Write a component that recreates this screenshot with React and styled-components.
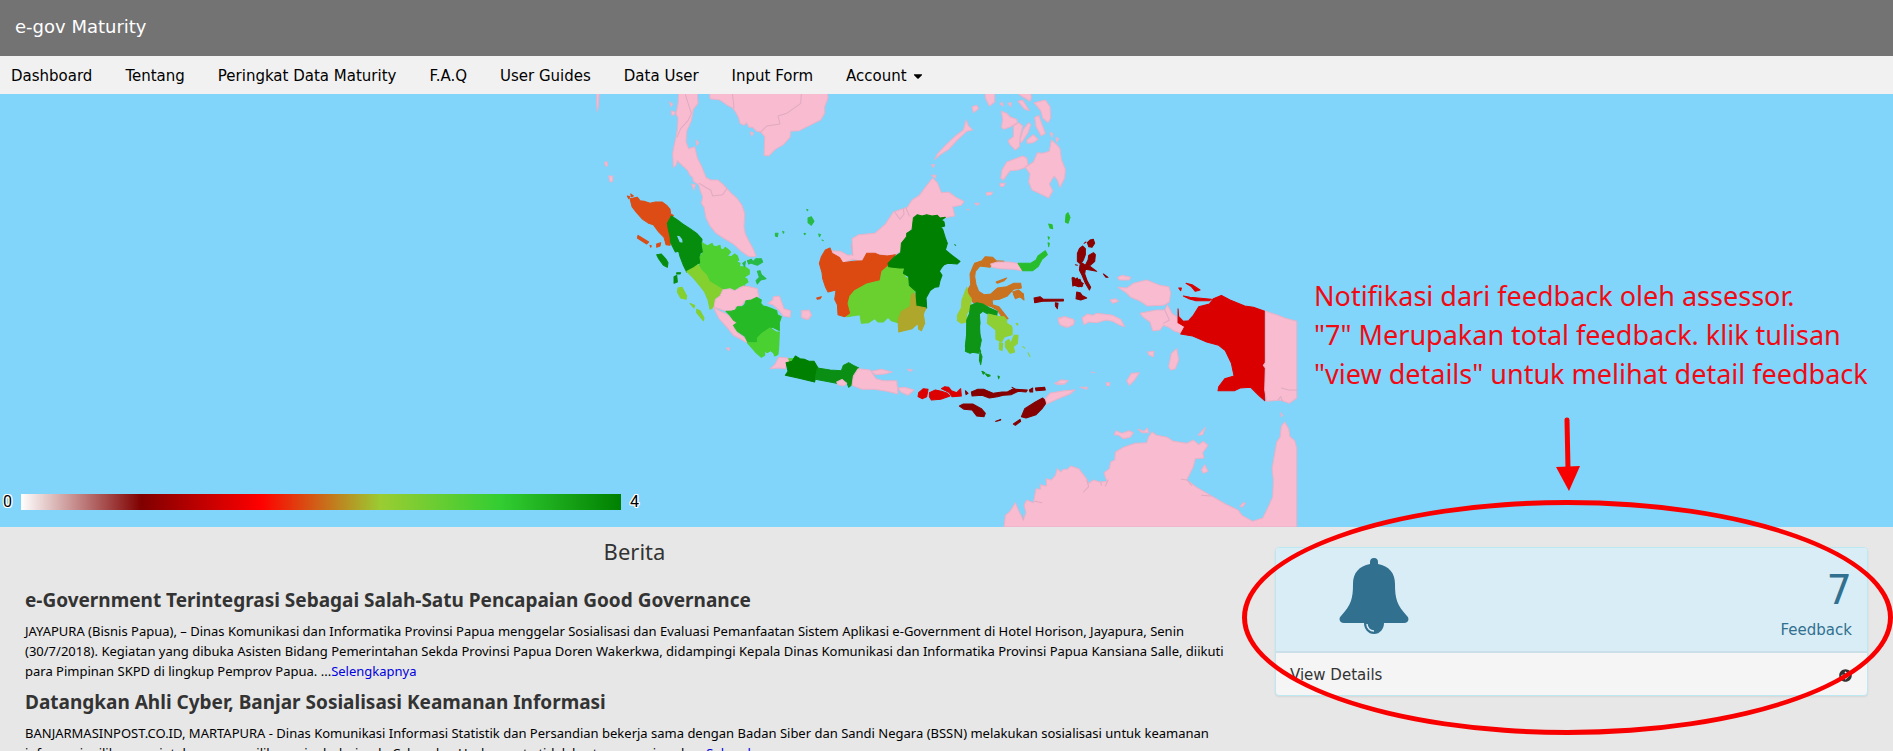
import React from "react";
import styled, { createGlobalStyle } from "styled-components";
import { FaArrowCircleRight, FaCaretDown } from "react-icons/fa";

const GlobalStyle = createGlobalStyle`
  *, *::before, *::after { box-sizing: border-box; }
  html { scrollbar-width: none; }
  body {
    margin: 0;
    overflow-x: hidden;
    background: #e7e7e7;
    color: #000;
    font: 15px/1.5 Verdana, "DejaVu Sans", sans-serif;
  }
`;

const reading = `"Segoe UI", "Noto Sans", "Open Sans", sans-serif`;

const Header = styled.header`
  display: flex;
  align-items: center;
  height: 56px;
  padding: 0 15px 3px;
  background: #737373;
  color: #fff;
  font-size: 18px;
`;

const Nav = styled.nav`
  display: flex;
  align-items: center;
  gap: 33px;
  height: 38px;
  padding: 2px 11px 0;
  background: #f1f1f1;
`;

const NavLink = styled.a`
  color: #000;
  text-decoration: none;
  white-space: nowrap;
`;

const NavButton = styled.button`
  display: flex;
  align-items: center;
  gap: 4px;
  padding: 0;
  border: 0;
  background: none;
  color: #000;
  font: inherit;
  cursor: pointer;
`;

const MapSection = styled.section`
  position: relative;
  display: grid;
  grid-template-columns: 24fr 11fr;
  background: #81d4fa;
`;

const MapDrawing = styled.svg`
  display: block;
  width: 100%;
  height: auto;
`;

const Legend = styled.div`
  position: absolute;
  left: 3px;
  bottom: 17px;
  width: 34%;
  max-width: 636px;
  display: flex;
  align-items: center;
  gap: 9px;
  font: 16px/16px Roboto, sans-serif;
  text-shadow: 1px 0 #fff, -1px 0 #fff, 0 1px #fff, 0 -1px #fff, 1px 1px #fff,
    -1px -1px #fff, 1px -1px #fff, -1px 1px #fff;
`;

const LegendBar = styled.div`
  flex: 1;
  height: 16px;
  background: linear-gradient(90deg, #fff, #800000 20%, #f00 40%, #9acd32 60%, #32cd32 80%, #008000);
`;

const Note = styled.p`
  margin: 0;
  padding: 182px 0 0 16px;
  color: #f00a14;
  font: 27px/39px ${reading};
  white-space: nowrap;
`;

const Content = styled.main`
  display: grid;
  grid-template-columns: 2fr 1fr;
  align-items: start;
`;

const News = styled.section`
  padding: 8px 18px 24px 25px;
`;

const NewsTitle = styled.h3`
  margin: 0 0 20px;
  color: #333;
  font: 400 22px/32px ${reading};
  text-align: center;
`;

const Article = styled.article`
  margin-bottom: 8px;
`;

const ArticleTitle = styled.h4`
  margin: 0 0 8px;
  color: #333;
  font: 700 19px/26px ${reading};
`;

const ArticleText = styled.p`
  margin: 0;
  font: 13px/20px ${reading};
`;

const MoreLink = styled.a`
  color: #0000e0;
  text-decoration: none;
`;

const Side = styled.aside`
  padding: 20px 25px 40px 13px;
`;

const Panel = styled.div`
  position: relative;
  border: 1px solid #bce8f1;
  border-radius: 4px;
  background: #f5f5f5;
  box-shadow: 0 1px 2px rgba(0, 0, 0, 0.08);
`;

const PanelHead = styled.div`
  display: flex;
  justify-content: space-between;
  height: 105px;
  padding: 10px 15px 0 63px;
  border-bottom: 2px solid #cbdfe8;
  border-radius: 3px 3px 0 0;
  background: #d9edf7;
  color: #31708f;
`;

const BellIcon = styled.svg`
  width: 70px;
  height: 76px;
  fill: currentColor;
`;

const Counter = styled.div`
  display: flex;
  flex-direction: column;
  padding-top: 8px;
  text-align: right;
`;

const CounterValue = styled.span`
  font-size: 40px;
  line-height: 48px;
`;

const CounterLabel = styled.span`
  padding-top: 4px;
  line-height: 24px;
`;

const PanelFoot = styled.a`
  display: flex;
  align-items: center;
  justify-content: space-between;
  height: 42px;
  padding: 2px 15px 0 14px;
  color: #333;
  text-decoration: none;
`;

const Highlight = styled.div`
  position: absolute;
  top: -48px;
  left: -34px;
  right: -26px;
  height: 235px;
  border: 5px solid #f80000;
  border-radius: 50%;
  pointer-events: none;
`;

const Arrow = styled.svg`
  position: absolute;
  left: calc(50% - 12px);
  bottom: calc(100% + 14px);
  width: 24px;
  height: 76px;
`;

const PINK = "#f8bbd0";

/* Each sheet is drawn at three units to one map pixel; x and y place it on the map. */
const sheets = [
  {
    x: 590,
    y: -4,
    regions: [
      [PINK, "M266 0 L264 40 258 72 264 84 262 118 258 142 252 168 248 190 250 232 258 226 262 212 276 226 292 240 300 256 308 262 310 274 326 284 330 300 338 320 334 340 342 352 348 384 360 408 378 430 400 444 430 462 454 484 474 498 486 500 498 498 490 478 478 456 466 432 462 412 464 370 456 346 442 326 424 310 400 284 384 270 362 270 348 262 336 232 322 204 314 170 296 176 288 156 290 124 304 92 310 58 324 40 322 0Z"],
      [PINK, "M358 0 L360 26 390 30 412 46 428 54 438 68 446 84 450 100 462 106 470 98 476 112 488 112 500 124 512 126 524 140 522 196 536 198 556 178 580 164 600 142 602 124 628 122 664 104 692 90 704 70 704 50 714 24 712 0Z"],
      [PINK, "M20 0 L20 40 22 64 25 50 28 0Z M44 216 L52 216 52 228 46 228Z M56 258 L68 258 68 274 60 276Z M238 36 L248 42 244 50Z M244 62 L256 66 252 76 244 74Z M304 282 L316 284 312 300Z M318 150 L326 158 320 166Z M480 126 L490 128 486 138Z M408 774 L420 774 416 782Z"],
      ["#dc4c14", "M120 326 L142 322 150 332 162 334 180 340 196 336 216 336 230 346 240 358 242 372 250 376 232 398 234 414 238 426 242 440 240 466 228 464 222 442 206 426 190 404 176 400 158 388 140 368 126 350Z M112 318 L120 320 116 326Z M122 312 L130 318 124 320Z M144 436 L176 456 170 462 142 444Z M200 462 L212 458 210 468 200 472Z M180 466 L184 468 182 472Z"],
      ["#078d0d", "M244 378 L262 390 278 402 300 416 320 430 336 448 334 466 340 486 330 490 330 500 332 518 322 522 318 534 308 532 290 546 280 526 270 500 266 484 256 486 248 470 242 458 240 440 234 414 232 400Z M200 494 L214 492 228 508 234 518 232 532 220 526 206 506Z M252 560 L260 556 262 576 252 580Z M260 548 L272 548 270 552 260 552Z"],
      ["#81d4fa", "M263 439 L268 440 275 449 276 456 270 455Z"],
      ["#4dd030", "M336 458 L346 464 352 468 366 460 370 468 378 470 390 466 392 476 398 480 406 472 414 478 422 486 412 498 424 500 434 492 442 498 446 510 440 516 450 520 448 530 464 530 478 540 478 552 462 562 470 566 474 576 464 582 464 590 450 588 434 600 420 594 398 598 380 586 360 576 352 556 334 540 328 526 332 518 330 500 340 486Z"],
      ["#27ba47", "M458 520 L466 514 464 530Z M472 512 L484 508 490 516 476 522Z M484 520 L498 506 514 506 518 516 502 526Z M502 544 L510 542 514 554 528 566 512 570 502 582 498 572 508 562Z M654 384 L664 380 672 394 664 406 654 398Z M556 430 L564 430 562 440 556 438Z M578 424 L582 426 580 430Z M650 358 L654 360 652 362Z M686 432 L692 434 688 440Z M696 450 L700 452Z M642 430 L647 431 644 434Z"],
      ["#83d02f", "M290 544 L310 534 324 524 334 540 350 556 358 574 380 588 400 600 394 614 376 626 370 652 360 658 354 630 344 606 330 588 310 564Z M264 594 L276 592 290 618 288 628 272 624 262 606Z M300 640 L314 646 312 654Z M320 658 L330 662 342 684 340 692 320 668Z"],
      [PINK, "M398 600 L420 596 434 602 460 588 478 590 502 596 506 620 486 628 464 634 456 646 438 650 434 660 410 664 398 660 372 652 376 628 390 618Z"],
      [PINK, "M370 652 L392 664 410 672 428 688 440 700 432 714 444 728 460 740 474 752 470 758 446 744 430 736 416 718 400 700 386 684Z"],
      ["#27ba27", "M408 664 L424 664 436 660 442 650 456 650 464 644 468 632 484 630 500 622 514 630 512 640 520 648 530 650 546 656 560 662 562 674 574 680 568 698 568 722 548 712 530 722 514 730 502 744 502 758 474 758 464 738 442 724 430 706 442 698 430 690 420 676Z"],
      ["#4bd032", "M472 758 L502 758 502 744 516 730 540 714 558 726 568 726 566 774 564 792 554 798 550 786 542 782 532 788 524 784 524 796 514 802 496 786Z"],
      [PINK, "M534 640 L548 630 550 620 568 618 574 634 582 656 602 662 600 682 580 678 566 660 548 644Z M634 662 L656 660 664 674 656 688 640 686Z"],
    ],
    borders: [
      "M286 14 L304 70 294 92 272 116 262 140",
      "M328 280 L350 294 362 300 368 318 398 314 410 296",
      "M426 0 L432 54 M512 126 L530 108 570 102 564 78 590 70 632 40 634 12",
    ],
  },
  {
    x: 800,
    y: -4,
    regions: [
      [PINK, "M92 482 L122 484 144 496 158 494 156 446 176 434 224 430 256 402 280 366 322 352 336 330 358 316 380 286 398 264 412 278 424 308 446 306 468 322 492 334 484 346 458 350 464 378 430 384 350 378 338 410 318 438 308 480 280 498 238 494 200 492 184 514 158 508 130 518Z"],
      [PINK, "M404 208 L412 192 440 162 466 138 490 120 498 90 506 108 518 120 500 124 470 152 446 178 418 196Z M516 50 L530 46 536 56 520 68Z M394 224 L404 224 400 232Z M394 256 L408 256 406 264Z"],
      [PINK, "M554 0 L584 0 584 36 568 48 556 24Z M604 64 L620 70 632 82 650 88 652 98 632 110 612 118 604 112 608 88Z M640 108 L656 98 668 108 660 140 658 170 646 180 630 164 624 152 640 140Z M686 98 L692 104 684 128 664 158 660 150 670 118Z M654 34 L668 30 688 62 672 56Z M640 0 L690 0 694 22 690 34 664 18Z M702 38 L736 30 750 50 752 84 744 98 728 84 722 62Z M704 82 L716 76 736 130 724 138 708 110Z M680 150 L700 134 714 148 700 158 682 160Z M600 42 L606 36 610 48Z M624 40 L634 38 632 50Z M750 128 L758 130 756 142Z M768 142 L776 146 770 156Z"],
      [PINK, "M754 150 L770 164 780 176 784 208 796 238 794 264 780 292 772 270 762 258 748 282 758 302 746 324 726 314 696 300 686 276 690 252 676 232 700 216 712 188 728 190 748 184Z M680 204 L668 198 646 206 620 216 606 240 602 264 610 270 620 256 630 242 654 240 672 234 684 224Z M600 280 L616 280 610 290 600 288Z M558 308 L578 306 574 314 560 316Z M524 340 L538 340 532 346Z M500 358 L508 360Z"],
      ["#dc4a12", "M90 474 L96 490 118 502 128 518 160 514 188 512 200 490 226 490 240 496 262 498 286 494 268 514 264 530 244 544 240 572 210 578 184 590 164 600 148 620 144 640 152 658 150 672 134 680 114 674 112 644 104 628 108 600 84 606 76 590 68 566 66 548 58 520 64 500 76 480Z M50 624 L64 620 60 626 52 628Z"],
      ["#69d030", "M262 530 L282 526 296 534 314 526 318 546 314 560 326 566 326 586 344 602 340 620 330 650 304 666 294 698 274 692 264 682 250 696 234 696 224 686 206 698 184 700 180 674 140 680 152 670 144 640 150 618 164 602 200 582 240 572 246 544Z"],
      ["#008000", "M340 384 L352 374 366 378 380 374 396 378 412 376 420 384 436 382 424 390 432 396 434 408 422 412 428 418 436 444 442 460 436 480 456 496 480 514 472 522 444 520 432 524 424 534 418 544 426 556 420 572 416 590 404 592 390 602 378 624 380 654 362 658 346 648 348 604 328 586 326 560 310 550 314 534 298 534 266 530 264 520 284 500 302 488 304 460 320 440 320 430 336 420Z M464 464 L467 466Z"],
      ["#aea72b", "M334 614 L344 610 348 648 378 654 370 672 374 700 364 722 356 718 354 700 336 716 296 726 294 690 304 664 330 650Z"],
      ["#c97220", "M510 552 L518 532 524 520 546 512 556 500 578 502 588 512 612 514 600 520 576 522 570 532 540 528 526 544 524 560 528 584 536 604 552 614 572 612 592 594 620 590 640 580 662 580 664 594 640 598 622 618 598 628 576 630 578 644 596 650 612 670 624 686 610 688 592 660 574 650 548 642 520 638 508 618 498 608 512 584Z M588 576 L620 564 612 572 592 580Z M638 606 L656 600 670 612 668 626 660 620 648 620Z"],
      [PINK, "M572 522 L592 516 628 516 652 520 664 534 666 542 640 538 600 536 576 532Z"],
      ["#28bd2c", "M654 520 L692 520 708 510 714 498 736 482 742 494 726 508 714 530 698 542 668 542Z M746 402 L756 404 758 416 750 414Z M798 374 L804 368 810 382 804 400 796 396Z M744 440 L748 442 746 448Z M744 458 L748 460 746 470Z"],
      ["#9acd32", "M500 592 L504 612 514 626 510 656 500 672 498 696 484 700 472 692 472 676 484 654 486 630Z"],
      ["#0e9515", "M512 646 L530 638 548 642 568 654 592 664 590 678 564 672 548 664 538 672 540 700 536 720 544 750 536 790 500 784 496 770 500 730 500 690 508 672Z"],
      ["#8ed033", "M564 672 L590 678 616 686 616 698 634 708 636 730 612 740 604 756 588 748 588 720 562 700Z"],
      ["#8b0000", "M832 490 L838 476 848 468 856 476 856 494 850 510 842 522 832 514Z M852 460 L858 456Z M862 458 L870 450 880 448 884 460 876 472 866 470Z M840 524 L848 520 856 526 864 510 866 496 880 488 886 494 884 514 868 528 890 544 870 540 856 538 854 552 862 574 872 592 868 600 856 580 846 556 838 540Z M826 524 L832 526Z M818 562 L822 564Z M822 570 L832 564 836 574 850 580 844 590 830 584 818 588Z M830 606 L840 608 846 616 860 624 842 630 828 626Z M702 624 L720 620 730 628 790 628 790 633 728 634 704 638Z M766 638 L774 640 772 656 766 648Z"],
      [PINK, "M774 684 L796 680 824 692 818 706 796 712 778 702Z M6 662 L28 662 34 676 22 688 4 682Z"],
    ],
    borders: ["M284 366 L300 388 312 372 310 356 M318 354 L328 378 M154 462 L158 496"],
  },
  {
    x: 930,
    y: 96,
    regions: [
      ["#0e9515", "M112 390 L148 390 150 440 146 470 152 484 136 484 120 490 106 484 110 440Z M150 484 L156 500 152 524 148 510Z M156 544 L164 548 160 552Z M168 552 L180 556 174 560Z M204 558 L208 560 206 566Z"],
      ["#8ed033", "M172 396 L190 380 222 380 230 390 230 404 246 412 246 434 224 440 214 454 198 446 198 420Z M208 458 L218 460 216 482 208 478Z M226 456 L236 448 242 460 252 436 264 436 262 460 250 470 254 486 240 490 226 470Z M258 400 L264 402 262 406Z M278 470 L284 474Z M294 488 L300 500Z"],
      ["#c97220", "M250 312 L262 304 280 312 282 330 270 320 256 326Z"],
      ["#8b0000", "M520 252 L534 262 528 262Z M426 264 L434 264 436 272 450 268 458 288 446 290 428 284Z"],
      [PINK, "M384 388 L402 380 430 388 432 402 414 412 390 404Z M456 384 L472 372 488 376 500 370 548 376 572 388 584 410 570 406 548 394 528 390 500 398 476 396 462 404Z M562 262 L576 256 602 262 598 270 568 270Z M540 330 L556 326 566 334 548 340Z M564 292 L590 294 610 280 650 270 690 286 716 290 722 308 718 336 700 346 652 348 628 332 602 322 588 308Z M630 370 L660 364 680 360 704 360 712 344 726 370 740 380 744 400 766 408 754 430 734 424 716 412 700 406 690 420 668 422 660 396 640 382Z M716 530 L724 490 740 476 746 510 736 536 722 540Z M652 486 L672 484 670 500 658 496Z M590 572 L604 550 628 548 612 572 598 586Z M374 580 L394 570 414 572 404 582 382 584Z M344 628 L360 610 400 604 434 600 420 612 380 626 352 640Z M528 578 L540 578 538 588 530 586Z M450 592 L472 592 470 598Z M484 546 L494 548Z"],
      ["#db0000", "M744 356 L746 380 760 394 776 392 790 376 806 350 838 342 850 326 874 316 900 330 944 348 970 352 1004 364 1004 632 986 616 962 592 930 594 914 602 864 602 866 590 884 566 912 558 904 520 886 482 866 466 830 456 788 438 752 432 764 410 744 398Z M768 280 L786 284 810 300 796 304 784 290Z M760 318 L780 322 844 328 838 332 798 332 776 326Z M746 294 L754 294 752 302Z"],
      [PINK, "M1006 364 L1040 374 1064 384 1100 394 1100 624 1078 640 1050 630 1010 634 1004 600 1006 534 1000 526 1006 518Z"],
    ],
    borders: ["M1054 594 L1076 600 1100 600 M1044 630 L1052 620 1058 634 M704 360 L718 390 700 400"],
  },
  {
    x: 770,
    y: 246,
    regions: [
      ["#4bd032", "M0 0 L26 0 20 46 0 30Z"],
      [PINK, "M26 52 L52 54 62 62 50 70 46 86 26 84 0 86 14 74Z"],
      ["#4bd032", "M56 56 L72 56 68 68 60 66Z"],
      ["#008000", "M48 68 L66 64 76 48 90 56 104 58 118 64 132 64 144 84 138 102 134 126 84 114 46 106 54 94Z"],
      ["#0a8f14", "M142 84 L180 90 214 92 220 76 236 68 250 76 266 84 260 100 250 106 250 130 236 142 230 126 216 120 200 130 136 118Z"],
      [PINK, "M264 86 L300 90 318 116 340 122 380 122 384 162 350 154 312 148 276 148 246 136 250 108Z M200 126 L216 118 230 130 222 138 204 134Z M304 94 L334 88 366 96 344 102 316 104Z M384 144 L404 142 432 150 414 166 392 156Z M412 88 L428 90 420 94Z"],
      ["#dd0000", "M446 158 L460 146 474 148 470 170 456 176 444 170Z M478 158 L496 150 514 154 532 160 540 168 512 178 484 180 478 170Z M514 146 L524 140 536 142 544 152 560 158 572 146 574 168 546 170 538 158Z"],
      ["#850000", "M586 152 L594 160 588 164Z M604 156 L622 148 642 148 670 160 696 156 712 156 726 148 740 150 756 150 740 156 724 164 700 166 682 170 658 174 636 166 606 168Z M726 142 L738 148 772 150 768 156 744 154Z M778 150 L788 144 788 156 780 156Z M796 144 L824 142 826 150 798 152Z M568 198 L580 192 608 192 634 206 646 220 642 230 620 228 606 210 582 208Z M676 244 L692 238 692 240 680 244Z M730 252 L750 238 752 244 736 256Z M754 230 L764 206 796 186 818 174 830 186 816 206 798 224 768 234Z"],
      [PINK, "M826 176 L840 160 884 152 914 150 898 162 864 176 830 192Z M856 130 L874 120 894 122 882 132Z"],
      ["#0e9515", "M636 94 L644 98 640 102Z M646 102 L660 108 652 108Z"],
    ],
    borders: [],
  },
  {
    x: 980,
    y: 306,
    regions: [
      [PINK, "M72 381 L76 346 90 334 106 308 116 332 130 360 138 338 132 316 140 300 160 308 168 266 182 268 180 254 200 258 198 236 214 240 226 226 232 206 242 216 250 208 262 208 272 198 296 206 318 234 326 250 340 240 360 246 380 244 372 218 388 206 392 186 404 180 406 156 430 142 466 130 500 128 506 110 516 96 530 106 562 112 580 124 620 130 640 120 656 134 670 124 684 136 668 158 672 174 646 176 640 200 620 240 650 262 688 284 736 312 774 330 786 346 818 364 848 354 864 322 878 290 880 240 876 206 884 160 890 126 900 112 904 78 914 66 926 86 930 110 944 122 950 144 950 381Z"],
      [PINK, "M402 104 L408 92 426 100 446 92 460 98 450 112 430 116 416 106Z M474 88 L492 94 502 84 506 98 486 98Z M664 210 L674 194 684 214 670 220Z M780 318 L790 308 796 310 786 322Z M902 38 L908 46 904 50Z M654 106 L676 82 668 104Z"],
    ],
    borders: [
      "M310 276 L326 260 320 240 M364 256 L362 246 M376 258 L384 240 M604 238 L622 240 634 256 M164 304 L186 308 M130 360 L126 344 M664 286 L692 288",
    ],
  },
];

const navItems = [
  "Dashboard",
  "Tentang",
  "Peringkat Data Maturity",
  "F.A.Q",
  "User Guides",
  "Data User",
  "Input Form",
];

const articles = [
  {
    title: "e-Government Terintegrasi Sebagai Salah-Satu Pencapaian Good Governance",
    text: "JAYAPURA (Bisnis Papua), – Dinas Komunikasi dan Informatika Provinsi Papua menggelar Sosialisasi dan Evaluasi Pemanfaatan Sistem Aplikasi e-Government di Hotel Horison, Jayapura, Senin (30/7/2018). Kegiatan yang dibuka Asisten Bidang Pemerintahan Sekda Provinsi Papua Doren Wakerkwa, didampingi Kepala Dinas Komunikasi dan Informatika Provinsi Papua Kansiana Salle, diikuti para Pimpinan SKPD di lingkup Pemprov Papua. ...",
  },
  {
    title: "Datangkan Ahli Cyber, Banjar Sosialisasi Keamanan Informasi",
    text: "BANJARMASINPOST.CO.ID, MARTAPURA - Dinas Komunikasi Informasi Statistik dan Persandian bekerja sama dengan Badan Siber dan Sandi Negara (BSSN) melakukan sosialisasi untuk keamanan informasi milik pemerintah, agar pemilik menjauh daripada Cyber dan Hacker serta tidak bertanggungjawab. ...",
  },
];

function IndonesiaMap() {
  return (
    <MapDrawing viewBox="0 0 1298 433" role="img" aria-label="Peta maturity Indonesia">
      {sheets.map((sheet) => (
        <g
          key={`${sheet.x}-${sheet.y}`}
          transform={`translate(${sheet.x} ${sheet.y}) scale(0.33333)`}
          strokeWidth="3"
          strokeLinejoin="round"
          strokeLinecap="round"
        >
          {sheet.regions.map(([fill, d]) => (
            <path key={d} d={d} fill={fill} stroke={fill === PINK ? "#e6b3c9" : fill} />
          ))}
          {sheet.borders.map((d) => (
            <path key={d} d={d} fill="none" stroke="#dfabc0" />
          ))}
        </g>
      ))}
    </MapDrawing>
  );
}

export default function App() {
  return (
    <>
      <GlobalStyle />
      <Header>e-gov Maturity</Header>
      <Nav>
        {navItems.map((item) => (
          <NavLink href="#" key={item}>
            {item}
          </NavLink>
        ))}
        <NavButton type="button">
          Account <FaCaretDown size={14} />
        </NavButton>
      </Nav>
      <MapSection>
        <IndonesiaMap />
        <Note>
          Notifikasi dari feedback oleh assessor.
          <br />
          "7" Merupakan total feedback. klik tulisan
          <br />
          "view details" untuk melihat detail feedback
        </Note>
        <Legend>
          <span>0</span>
          <LegendBar />
          <span>4</span>
        </Legend>
      </MapSection>
      <Content>
        <News>
          <NewsTitle>Berita</NewsTitle>
          {articles.map((article) => (
            <Article key={article.title}>
              <ArticleTitle>{article.title}</ArticleTitle>
              <ArticleText>
                {article.text}
                <MoreLink href="#">Selengkapnya</MoreLink>
              </ArticleText>
            </Article>
          ))}
        </News>
        <Side>
          <Panel>
            <PanelHead>
              <BellIcon viewBox="0 0 70 76" aria-hidden="true">
                <path d="M35 0 C32 0 31 2 31 4 V6 C20 8 14 15 14 26 C14 41 12 47 2 58 C-1 61 1 65 5 65 H25 C25 71 29 76 35 76 C41 76 45 71 45 65 H65 C69 65 71 61 68 58 C58 47 56 41 56 26 C56 15 50 8 39 6 V4 C39 2 38 0 35 0 Z" />
                <path d="M28 66 C28 70 31 73 35 73" fill="none" stroke="#d9edf7" strokeWidth="1.5" />
              </BellIcon>
              <Counter>
                <CounterValue>7</CounterValue>
                <CounterLabel>Feedback</CounterLabel>
              </Counter>
            </PanelHead>
            <PanelFoot href="#">
              <span>View Details</span>
              <FaArrowCircleRight size={13} />
            </PanelFoot>
            <Highlight>
              <Arrow viewBox="0 0 24 76" aria-hidden="true">
                <path d="M11 5 L12 54" stroke="#f80000" strokeWidth="5" strokeLinecap="round" />
                <path d="M0 52 L24 51 L13 76 Z" fill="#f80000" />
              </Arrow>
            </Highlight>
          </Panel>
        </Side>
      </Content>
    </>
  );
}
